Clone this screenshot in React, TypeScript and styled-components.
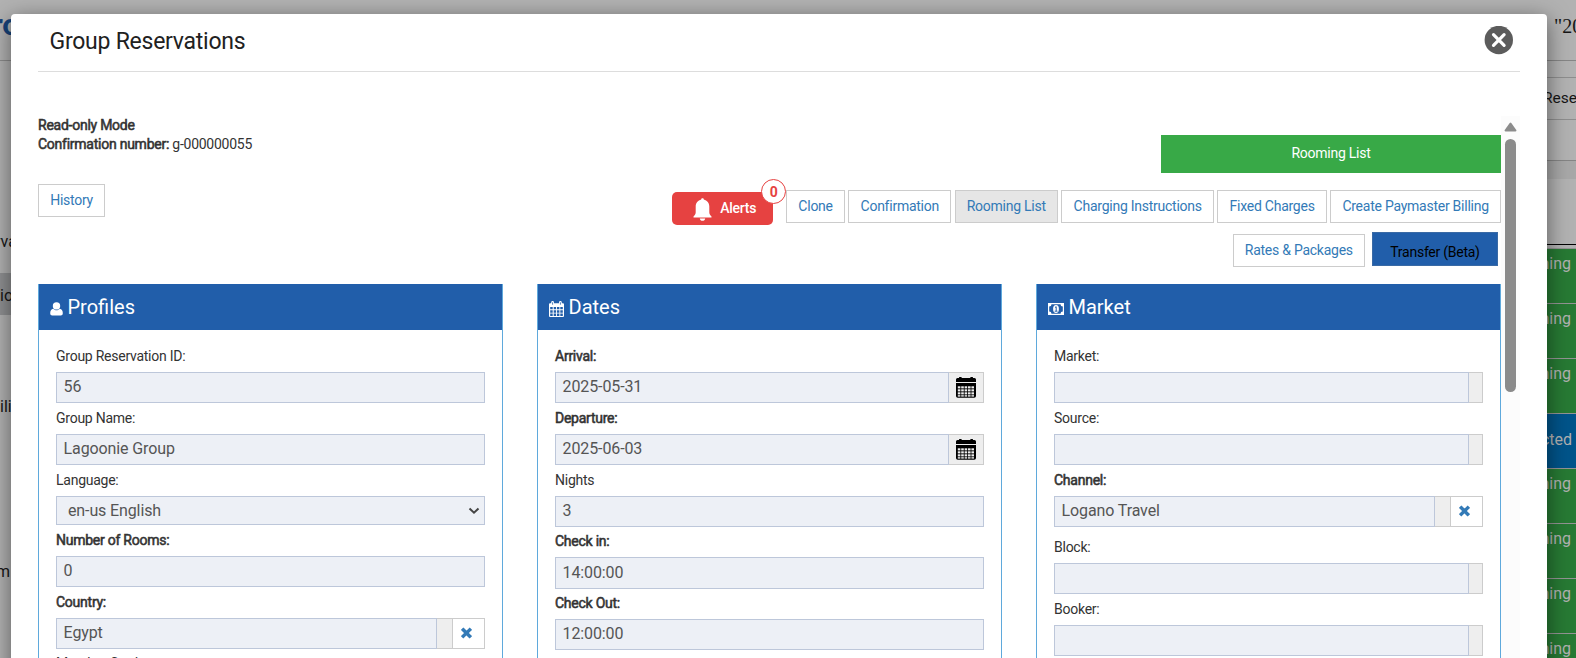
import React from 'react';
import styled, { createGlobalStyle, css } from 'styled-components';

const Global = createGlobalStyle`
  * { box-sizing: border-box; }
  html, body { margin: 0; height: 100%; overflow: hidden; }
  body { font-family: Roboto, "Liberation Sans", sans-serif; font-size: 14px; line-height: 20px; letter-spacing: -0.25px; color: #333; background: #b2b2b2; }
  button { letter-spacing: inherit; }
`;

const Screen = styled.div`
  position: relative;
  height: 658px;
  overflow: hidden;
`;

/* ---------- dimmed page behind the dialog ---------- */
const Backdrop = styled.div`
  display: flex;
  justify-content: space-between;
  height: 100%;
  background: #b2b2b2;
  letter-spacing: 0;
`;
const Side = styled.div`
  width: 60px;
  display: flex;
  flex-direction: column;
  overflow: hidden;
  & > * { flex: none; }
`;
const Logo = styled.div`
  height: 61px;
  padding-top: 8px;
  border-bottom: 1px solid #8b8b8b;
  font: 900 31px/31px Lato, sans-serif;
  color: #17437a;
  text-indent: -9px;
`;
const NavItem = styled.div<{ $gap: number; $active?: boolean; $indent?: number }>`
  height: 42px;
  margin-top: ${(p) => p.$gap}px;
  font-size: 16px;
  line-height: 45px;
  color: #161616;
  white-space: nowrap;
  text-indent: ${(p) => p.$indent ?? 0}px;
  background: ${(p) => (p.$active ? '#8f9092' : 'transparent')};
`;
const Clock = styled.div`
  height: 61px;
  padding: 13px 0 0 38px;
  border-bottom: 1px solid #868686;
  font: 20px/27px "Liberation Serif", serif;
  color: #161616;
  white-space: nowrap;
`;
const Crumb = styled.div`
  height: 43px;
  margin-top: 16px;
  padding-left: 27px;
  border: solid #8e8e8e;
  border-width: 1px 0;
  font-size: 15.5px;
  line-height: 40px;
  color: #161616;
  white-space: nowrap;
`;
const Band = styled.div`
  height: 19px;
  margin-top: 40px;
  border-top: 1px solid #858585;
  background: #a8a8a8;
`;
const Rule = styled.div`
  height: 2px;
  margin: 65px 0 2px;
  border-top: 1px solid #000;
`;
const Cell = styled.div<{ $selected?: boolean }>`
  display: flex;
  justify-content: flex-end;
  height: 55px;
  padding: ${(p) => (p.$selected ? '16px 4px' : '5px 5px')} 0 0;
  border-top: 1px solid #949494;
  background: ${(p) => (p.$selected ? '#00548a' : '#277a34')};
  color: #b2b2b2;
  font-size: 16px;
`;

/* ---------- dialog ---------- */
const Dialog = styled.div`
  position: absolute;
  left: 11px;
  top: 14px;
  width: 1536px;
  height: 700px;
  padding: 0 27px;
  background: #fff;
  border-radius: 4px;
  box-shadow: 0 5px 22px rgba(0, 0, 0, 0.5);
`;
const DialogHead = styled.div`
  display: flex;
  justify-content: space-between;
  height: 58px;
  padding: 12px 7px 0 11.5px;
  border-bottom: 1px solid #ddd;
`;
const Title = styled.h1`
  margin: 0;
  font-weight: 400;
  font-size: 23px;
  line-height: 32px;
  color: #212121;
`;
const Scroller = styled.div`
  display: flex;
  margin-top: 44px;
`;
const Content = styled.div`
  width: 1463px;
`;
const Track = styled.div`
  width: 19px;
  height: 600px;
  padding: 6px 3px 0 3px;
  background: #fcfcfc;
  display: flex;
  flex-direction: column;
  align-items: center;
`;
const Thumb = styled.div`
  width: 11px;
  height: 253px;
  margin: 7px 0 0;
  border-radius: 6px;
  background: #8b8b8b;
`;
const Top = styled.div`
  display: flex;
  justify-content: space-between;
  height: 168px;
`;
const Info = styled.div`
  line-height: 19px;
`;
const strong = css`
  font-weight: 400;
  -webkit-text-stroke: 0.55px currentColor;
`;
const Strong = styled.span`
  ${strong}
`;
const Button = styled.button<{ $active?: boolean }>`
  height: 33px;
  padding: 0 11.2px;
  border: 1px solid #ccc;
  background: ${(p) => (p.$active ? '#e6e6e6' : '#fff')};
  color: #337ab7;
  font: 14px/31px Roboto, sans-serif;
  white-space: nowrap;
`;
const HistoryWrap = styled.div`
  margin-top: 30px;
`;
const Actions = styled.div`
  display: flex;
  flex-direction: column;
  align-items: flex-end;
  padding-top: 19px;
`;
const GreenButton = styled.button`
  width: 340px;
  height: 38px;
  padding: 1px 0 2px;
  border: 0;
  background: #38a947;
  color: #fff;
  font: 14px/35px Roboto, sans-serif;
`;
const Row = styled.div`
  display: flex;
  align-items: flex-start;
  gap: 3.4px;
  margin-top: 17px;
`;
const SecondRow = styled.div`
  display: flex;
  align-items: flex-start;
  gap: 7px;
  margin: 7px 3px 0 0;
  & > :first-child { margin-top: 2px; }
`;
const TransferButton = styled.button`
  width: 126px;
  height: 34px;
  padding: 5px 0 0;
  border: 1px solid #3a6aa5;
  background: #215eaa;
  color: #000;
  font: 14px/26px Roboto, sans-serif;
`;
const AlertButton = styled.div`
  position: relative;
  display: flex;
  align-items: center;
  width: 101px;
  height: 33px;
  margin: 2px 9.6px 0 0;
  padding: 0 0 1px 21px;
  gap: 8px;
  border-radius: 5px;
  background: #e64241;
  color: #fff;
  font-weight: 500;
  & > svg { margin-top: 2px; }
`;
const AlertCount = styled.span`
  position: absolute;
  right: -13px;
  top: -13px;
  width: 25px;
  height: 25px;
  border: 1px solid #e64241;
  border-radius: 50%;
  background: #fff;
  color: #e64241;
  font-weight: 700;
  line-height: 25px;
  text-align: center;
`;

const Panels = styled.div`
  display: grid;
  grid-template-columns: repeat(3, 465px);
  gap: 34px;
`;
const Panel = styled.section`
  height: 500px;
  border: solid #5fa9dc;
  border-width: 0 1px;
`;
const PanelHead = styled.h2`
  display: flex;
  align-items: center;
  height: 46px;
  margin: 0;
  padding: 0 0 1px 11px;
  gap: 4.5px;
  background: #215eaa;
  color: #fff;
  font-weight: 400;
  font-size: 20px;
  letter-spacing: 0;
  & > svg { margin-top: 4px; }
`;
const PanelBody = styled.div`
  padding: 11px 17px 0;
`;
const Field = styled.div<{ $gap?: number }>`
  padding-top: ${(p) => p.$gap ?? 6}px;
`;
const Label = styled.label<{ $strong?: boolean }>`
  display: block;
  height: 25px;
  line-height: 18px;
  ${(p) => p.$strong && strong}
`;
const Group = styled.div<{ $height?: number }>`
  display: flex;
  height: ${(p) => p.$height ?? 31}px;
`;
const Value = styled.div`
  flex: 1;
  display: flex;
  align-items: center;
  justify-content: space-between;
  padding: 0 4px 1px 6.6px;
  border: 1px solid #bdc7da;
  background: #edf0f6;
  color: #555;
  font-size: 16px;
  letter-spacing: -0.12px;
`;
const SelectValue = styled(Value)`
  padding: 1px 4px 0 11px;
`;
const Addon = styled.div<{ $width: number }>`
  width: ${(p) => p.$width}px;
  display: flex;
  align-items: center;
  justify-content: center;
  border: 1px solid #ccc;
  border-left: 0;
  background: #eee;
`;
const Clear = styled.div`
  width: 32px;
  display: flex;
  align-items: center;
  padding: 0 0 2px 7.5px;
  border: 1px solid #ccc;
  border-left: 0;
  background: #fff;
  color: #337ab7;
`;

/* ---------- icons ---------- */
const CloseIcon = () => (
  <svg width="29" height="29" viewBox="0 0 29 29">
    <circle cx="14.8" cy="14" r="14.2" fill="#5c5c5c" />
    <path d="M9.500 8.700 20.100 19.300M20.100 8.700 9.500 19.300" stroke="#fff" strokeWidth="3.200" strokeLinecap="round" />
  </svg>
);
const BellIcon = () => (
  <svg width="19" height="23" viewBox="0 0 19 23" fill="#fff">
    <path d="M9.500 .3c.8 0 1.300.5 1.300 1.300 3.300.8 5.500 3.500 5.500 7v5.600c0 1.800.8 3 2.200 4.200v1.200H.5v-1.200c1.400-1.200 2.200-2.400 2.200-4.200V8.600c0-3.500 2.200-6.200 5.500-7 0-.8.5-1.300 1.300-1.300zM6.800 20.400h5.400c-.2 1.500-1.300 2.400-2.700 2.400s-2.500-.9-2.700-2.400z" />
  </svg>
);
const UserIcon = () => (
  <svg width="13" height="14" viewBox="0 0 13 14" fill="#fff">
    <circle cx="6.500" cy="3.900" r="3.700" />
    <path d="M3.200 6.800C1.200 7 .2 8.800.2 11.300c0 1.300.9 2.300 2 2.300h8.600c1.100 0 2-1 2-2.300 0-2.500-1-4.300-3-4.500-.8.900-1.900 1.500-3.300 1.500S4 7.700 3.200 6.800z" />
  </svg>
);
const DatesIcon = () => (
  <svg width="15" height="16" viewBox="0 0 15 16">
    <path fill="#fff" fillRule="evenodd" d="M0 3.200a1 1 0 0 1 1-1h1.200V1.500a1.400 1.400 0 0 1 2.800 0v.7h5V1.500a1.400 1.400 0 0 1 2.800 0v.7H14a1 1 0 0 1 1 1V15a1 1 0 0 1-1 1H1a1 1 0 0 1-1-1zM1.200 6v2.300h2.500V6zm3.500 0v2.300h2.400V6zm3.300 0v2.300h2.400V6zm3.300 0v2.300h2.500V6zM1.200 9.200v2.500h2.500V9.200zm3.500 0v2.500h2.400V9.200zm3.300 0v2.500h2.400V9.200zm3.300 0v2.500h2.500V9.200zM1.200 12.600V15h2.500v-2.400zm3.500 0V15h2.400v-2.400zm3.300 0V15h2.400v-2.400zm3.300 0V15h2.500v-2.400z" />
    <path d="M3.600 1.300v2.400M11.400 1.300v2.400" stroke="#215eaa" strokeWidth=".8" />
  </svg>
);
const MoneyIcon = () => (
  <svg width="16" height="12" viewBox="0 0 16 12">
    <rect width="16" height="12" fill="#fff" />
    <path fill="#215eaa" d="M3.500 1.200h9a2.300 2.300 0 0 0 2.300 2.300v5a2.300 2.300 0 0 0-2.300 2.300h-9A2.300 2.300 0 0 0 1.200 8.500v-5A2.300 2.300 0 0 0 3.500 1.200z" />
    <ellipse cx="8" cy="6" rx="2.900" ry="3.900" fill="#fff" />
    <path d="M7 4.500 8.200 3.700V8M6.700 8.200h2.800" stroke="#215eaa" strokeWidth="1" fill="none" />
  </svg>
);
const PickerIcon = () => (
  <svg width="20" height="21" viewBox="0 0 20 21">
    <path fill="#000" d="M0 2.500A1.500 1.500 0 0 1 1.500 1H3V.5Q3 0 3.500 0h1.700q.5 0 .5.500V1h8.600V.5q0-.5.500-.5h1.700q.5 0 .5.500V1h1.500A1.500 1.500 0 0 1 20 2.500V5H0zM0 6h20v13a1.800 1.800 0 0 1-1.800 1.800H1.800A1.800 1.800 0 0 1 0 19z" />
    <g fill="#eee">
      {[9.3, 12.3, 15.3, 18.2].map((y) =>
        [1.8, 5.2, 8.6, 12, 15.4].map((x) => <rect key={`${x}-${y}`} x={x} y={y} width="2.6" height={y > 18 ? 1.4 : 2.1} />)
      )}
    </g>
  </svg>
);
const ClearIcon = () => (
  <svg width="11" height="12" viewBox="0 0 11 12">
    <path d="M2.300 2.800 8.700 9.200M8.700 2.800 2.300 9.200" stroke="currentColor" strokeWidth="3.400" strokeLinecap="square" />
  </svg>
);
const Chevron = () => (
  <svg width="12" height="8" viewBox="0 0 12 8">
    <path d="M1.500 1.500 6 5.700 10.500 1.500" stroke="#444" strokeWidth="2" fill="none" />
  </svg>
);
const ArrowUp = () => (
  <svg width="13" height="10" viewBox="0 0 12 10">
    <path d="M5.200.9q.8-1 1.600 0l5 7q.5 1.400-1 1.500H1.200Q-.3 9.300.2 7.900z" fill="#8b8b8b" />
  </svg>
);

type FieldData = {
  label: string;
  strong?: boolean;
  value?: string;
  kind?: 'text' | 'select' | 'date' | 'lookup' | 'clearable';
  gap?: number;
  height?: number;
};

const addonWidth = { date: 35, lookup: 14, clearable: 16 };

const FormField = ({ label, strong: isStrong, value, kind = 'text', gap, height }: FieldData) => (
  <Field $gap={gap}>
    <Label $strong={isStrong}>{label}</Label>
    <Group $height={kind === 'select' ? 29 : height}>
      {kind === 'select' ? (
        <SelectValue>{value}<Chevron /></SelectValue>
      ) : (
        <Value>{value}</Value>
      )}
      {kind !== 'select' && kind !== 'text' && (
        <Addon $width={addonWidth[kind]}>{kind === 'date' && <PickerIcon />}</Addon>
      )}
      {kind === 'clearable' && <Clear><ClearIcon /></Clear>}
    </Group>
  </Field>
);

const panels: { title: string; icon: React.ReactNode; fields: FieldData[] }[] = [
  {
    title: 'Profiles',
    icon: <UserIcon />,
    fields: [
      { label: 'Group Reservation ID:', value: '56' },
      { label: 'Group Name:', value: 'Lagoonie Group' },
      { label: 'Language:', value: 'en-us English', kind: 'select' },
      { label: 'Number of Rooms:', value: '0', strong: true },
      { label: 'Country:', value: 'Egypt', strong: true, kind: 'clearable' },
      { label: 'Member Card:', gap: 5 },
    ],
  },
  {
    title: 'Dates',
    icon: <DatesIcon />,
    fields: [
      { label: 'Arrival:', value: '2025-05-31', strong: true, kind: 'date' },
      { label: 'Departure:', value: '2025-06-03', strong: true, kind: 'date' },
      { label: 'Nights', value: '3' },
      { label: 'Check in:', value: '14:00:00', strong: true, gap: 5, height: 32 },
      { label: 'Check Out:', value: '12:00:00', strong: true, gap: 5 },
    ],
  },
  {
    title: 'Market',
    icon: <MoneyIcon />,
    fields: [
      { label: 'Market:', kind: 'lookup' },
      { label: 'Source:', kind: 'lookup' },
      { label: 'Channel:', value: 'Logano Travel', strong: true, kind: 'clearable' },
      { label: 'Block:', kind: 'lookup', gap: 11 },
      { label: 'Booker:', kind: 'lookup' },
    ],
  },
];

const cells = [false, false, false, true, false, false, false, false];

export default function App() {
  return (
    <Screen>
      <Global />
      <Backdrop>
        <Side>
          <Logo>ro</Logo>
          <NavItem $gap={158} $indent={-5}>rvations</NavItem>
          <NavItem $gap={12} $active>ions</NavItem>
          <NavItem $gap={69}>ility</NavItem>
          <NavItem $gap={123} $indent={-4}>m</NavItem>
        </Side>
        <Side>
          <Clock>"2025</Clock>
          <Crumb>Reservation</Crumb>
          <Band />
          <Rule />
          {cells.map((selected, i) => (
            <Cell key={i} $selected={selected}>{selected ? 'cted' : 'ming'}</Cell>
          ))}
        </Side>
      </Backdrop>
      <Dialog>
        <DialogHead>
          <Title>Group Reservations</Title>
          <CloseIcon />
        </DialogHead>
        <Scroller>
          <Content>
            <Top>
              <Info>
                <div><Strong>Read-only Mode</Strong></div>
                <div><Strong>Confirmation number:</Strong> g-000000055</div>
                <HistoryWrap><Button>History</Button></HistoryWrap>
              </Info>
              <Actions>
                <GreenButton>Rooming List</GreenButton>
                <Row>
                  <AlertButton><BellIcon />Alerts<AlertCount>0</AlertCount></AlertButton>
                  <Button>Clone</Button>
                  <Button>Confirmation</Button>
                  <Button $active>Rooming List</Button>
                  <Button>Charging Instructions</Button>
                  <Button>Fixed Charges</Button>
                  <Button>Create Paymaster Billing</Button>
                </Row>
                <SecondRow>
                  <Button>Rates &amp; Packages</Button>
                  <TransferButton>Transfer (Beta)</TransferButton>
                </SecondRow>
              </Actions>
            </Top>
            <Panels>
              {panels.map((panel) => (
                <Panel key={panel.title}>
                  <PanelHead>{panel.icon}{panel.title}</PanelHead>
                  <PanelBody>
                    {panel.fields.map((field) => <FormField key={field.label} {...field} />)}
                  </PanelBody>
                </Panel>
              ))}
            </Panels>
          </Content>
          <Track><ArrowUp /><Thumb /></Track>
        </Scroller>
      </Dialog>
    </Screen>
  );
}
